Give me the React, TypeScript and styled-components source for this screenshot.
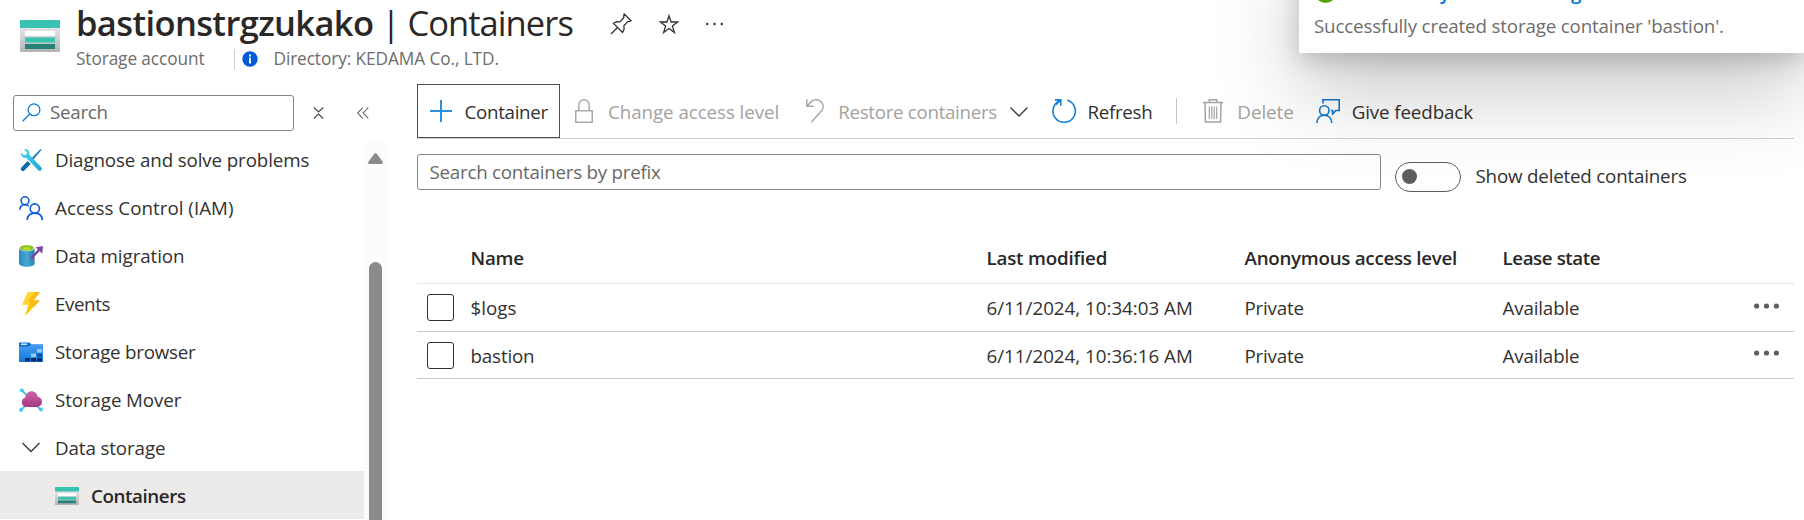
import React from 'react';
import styled, { createGlobalStyle, css } from 'styled-components';

const Global = createGlobalStyle`
  * { box-sizing: border-box; }
  body {
    margin: 0;
    background: #fff;
    color: #323130;
    font-family: "Open Sans", "Noto Sans", sans-serif;
    font-size: 18.75px;
    line-height: 26px;
    overflow: hidden;
  }
  svg { display: block; flex: none; overflow: visible; }
`;

const Page = styled.div`
  position: relative;
  width: 1804px;
  height: 520px;
  overflow: hidden;
  display: flex;
  flex-direction: column;
`;

/* Text with optional tracking */
const Label = styled.span<{ $track?: number }>`
  white-space: pre;
  letter-spacing: ${(p) => p.$track ?? 0}px;
`;

/* ---------- header ---------- */
const Header = styled.header`
  height: 84px;
  flex: none;
  display: flex;
  padding: 0 0 0 20px;
`;
const HeaderIcon = styled.div`
  width: 40px;
  padding-top: 20px;
`;
const HeaderText = styled.div`
  margin-left: 16px;
`;
const TitleRow = styled.div`
  height: 48px;
  display: flex;
  align-items: center;
`;
const Title = styled.h1`
  margin: 0;
  padding-bottom: 2px;
  font-size: 34.5px;
  line-height: 46px;
  font-weight: 400;
  color: #292827;
  white-space: pre;
  letter-spacing: -0.95px;
`;
const TitleName = styled.strong`
  font-weight: 600;
  letter-spacing: -0.62px;
`;
const TitleActions = styled.div`
  display: flex;
  align-items: center;
  gap: 27px;
  margin-left: 37px;
  height: 48px;
`;
const SubRow = styled.div`
  display: flex;
  align-items: center;
  height: 22px;
  font-size: 17.25px;
  line-height: 22px;
  color: #6e6d6c;
`;
const SubDivider = styled.div`
  width: 1px;
  height: 21px;
  margin: 0 7px 0 30px;
  background: #d2d0ce;
`;
const InfoIcon = styled.svg`
  margin-right: 15px;
`;

const Body = styled.div`
  display: flex;
  flex: 1;
  min-height: 0;
`;

/* ---------- sidebar ---------- */
const Sidebar = styled.aside`
  width: 417px;
  flex: none;
  display: flex;
  flex-direction: column;
`;
const SideTop = styled.div`
  display: flex;
  align-items: center;
  height: 51px;
  padding: 7px 0 0 13px;
`;
const boxed = css`
  border: 1px solid #868584;
  border-radius: 3px;
  background: #fff;
  display: flex;
  align-items: center;
  color: #696867;
`;
const SideSearch = styled.div`
  ${boxed}
  width: 281px;
  height: 36px;
  padding: 0 0 2px 8px;
  gap: 9px;
`;
const SideTools = styled.div`
  display: flex;
  align-items: center;
  margin-left: 19px;
  gap: 33px;
`;
const SideScroll = styled.div`
  display: flex;
  flex: 1;
  min-height: 0;
`;
const Menu = styled.nav`
  width: 364px;
`;
const MenuItem = styled.div<{ $selected?: boolean }>`
  display: flex;
  align-items: center;
  height: 48px;
  padding-top: 2px;
  padding-left: ${(p) => (p.$selected ? 55 : 19)}px;
  gap: 12px;
  background: ${(p) => (p.$selected ? '#edebea' : 'transparent')};
  font-weight: ${(p) => (p.$selected ? 600 : 400)};
  color: ${(p) => (p.$selected ? '#292827' : '#323130')};
`;
const ScrollTrack = styled.div`
  width: 23px;
  margin-top: 6px;
  background: #fcfcfc;
  display: flex;
  flex-direction: column;
  align-items: center;
  padding-top: 12px;
`;
const ScrollThumb = styled.div`
  width: 13px;
  flex: 1;
  margin-top: 98px;
  border-radius: 7px 7px 0 0;
  background: #8b8b8b;
`;

/* ---------- content ---------- */
const Content = styled.main`
  flex: 1;
  display: flex;
  flex-direction: column;
  padding-right: 10px;
`;
const Toolbar = styled.div`
  display: flex;
  height: 55px;
  border-bottom: 1px solid #d0cfce;
`;
const Command = styled.div<{ $left?: number; $gap: number; $disabled?: boolean; $focused?: boolean }>`
  display: flex;
  align-items: center;
  height: 54px;
  margin-left: ${(p) => p.$left ?? 0}px;
  gap: ${(p) => p.$gap}px;
  color: ${(p) => (p.$disabled ? '#a3a2a1' : '#323130')};
  ${Label} {
    padding-top: 2px;
  }
  ${(p) =>
    p.$focused &&
    css`
      width: 143px;
      border: 1px solid #4f4e4d;
      padding-left: 12px;
    `}
`;
const CommandDivider = styled.div`
  width: 1px;
  height: 26px;
  margin: 14px 0 0 24px;
  background: #c8c6c4;
`;
const FilterRow = styled.div`
  display: flex;
  height: 53px;
  padding-top: 15px;
`;
const PrefixSearch = styled.div`
  ${boxed}
  width: 964px;
  height: 36px;
  padding: 0 0 1px 11.5px;
  background: transparent;
`;
const Toggle = styled.div`
  width: 66px;
  height: 30px;
  margin: 8px 14.5px 0 14px;
  border: 1px solid #605e5c;
  border-radius: 15px;
  padding: 6px;
`;
const Knob = styled.div`
  width: 15px;
  height: 15px;
  border-radius: 50%;
  background: #605e5c;
`;
const ToggleLabel = styled.div`
  padding-top: 9px;
`;

const grid = css`
  display: grid;
  grid-template-columns: 53.5px 516px 258px 258px 251.5px 40px;
  align-items: center;
`;
const TableHead = styled.div`
  ${grid}
  height: 52px;
  margin-top: 40px;
  padding-top: 1px;
  font-weight: 600;
  color: #292827;
  border-bottom: 1px solid #e8e7e6;
`;
const TableRow = styled.div<{ $height: number }>`
  ${grid}
  height: ${(p) => p.$height}px;
  border-bottom: 1px solid #c9c8c7;
`;
const Checkbox = styled.div`
  width: 27px;
  height: 27px;
  margin-left: 10px;
  border: 1px solid #323130;
  border-radius: 3px;
`;
const Cell = styled(Label)`
  padding-top: 1px;
`;
const RowMenu = styled.div`
  padding: 0 0 4px 0;
`;

/* ---------- notification ---------- */
const Toast = styled.section`
  position: absolute;
  top: -60px;
  left: 1299px;
  width: 505px;
  height: 113px;
  background: #fff;
  padding: 42px 0 0 15px;
  box-shadow: 0 38px 86px rgba(0, 0, 0, 0.22), 0 7px 22px rgba(0, 0, 0, 0.18);
`;
const ToastTitle = styled.div`
  display: flex;
  align-items: center;
  gap: 7px;
  height: 22px;
  line-height: 22px;
  font-weight: 600;
  color: #0078d4;
`;
const ToastText = styled.div`
  margin-top: 9px;
  color: #6e6d6c;
`;

/* ---------- icons ---------- */
const StorageIcon = ({ w, h }: { w: number; h: number }) => (
  <svg width={w} height={h} viewBox="0 0 40 32" preserveAspectRatio="none">
    <defs>
      <linearGradient id="stg" x1="0" y1="0" x2="0" y2="1">
        <stop offset="0" stopColor="#e6e6e6" />
        <stop offset="1" stopColor="#b3b3b3" />
      </linearGradient>
    </defs>
    <path d="M0 7h40v23.500a1.500 1.500 0 0 1-1.500 1.500h-37A1.500 1.500 0 0 1 0 30.500z" fill="url(#stg)" />
    <path d="M1 0h38a1 1 0 0 1 1 1v7H0V1a1 1 0 0 1 1-1z" fill="#37c2b1" />
    <path d="M5 11h30v5H5z" fill="#fff" />
    <path d="M5 17.500h30v5H5z" fill="#37c2b1" />
    <path d="M5 24h30v5H5z" fill="#258277" />
  </svg>
);
const PinIcon = () => (
  <svg width="22" height="22" viewBox="0 0 22 22" fill="none" stroke="#323130" strokeWidth="1.300">
    <path d="M1 21l6.500-6.500M14.200 1l6.800 6.800-2 .9-1.300-.1-3.800 4.200.2 3.500-1.600 3.100L3.500 10.400l3-1.700 3.400.2 3.900-4.200-.1-1.600z" />
  </svg>
);
const StarIcon = () => (
  <svg width="20" height="20" viewBox="0 0 20 20" fill="none" stroke="#323130" strokeWidth="1.300">
    <path d="M10 1.800l2.100 6.200h6.500l-5.200 3.900 2 6.700L10 14.600l-5.400 4 2-6.700L1.400 8h6.500z" />
  </svg>
);
const SearchIcon = () => (
  <svg width="19" height="19" viewBox="0 0 19 19" fill="none" stroke="#0f7bd4" strokeWidth="1.300">
    <circle cx="12" cy="6.800" r="5.900" />
    <path d="M7.700 11L.6 18.200" />
  </svg>
);
const CollapseIcon = () => (
  <svg width="11" height="12" viewBox="0 0 11 12" fill="none" stroke="#484746" strokeWidth="1.100">
    <path d="M.8.500l4.700 4.400L10.200.500M.8 11.500l4.700-4.400 4.700 4.400" />
  </svg>
);
const DoubleLeftIcon = () => (
  <svg width="12" height="12" viewBox="0 0 12 12" fill="none" stroke="#605e5c" strokeWidth="1.100">
    <path d="M5.800.500L.700 6l5.100 5.500M11.300.500L6.200 6l5.100 5.500" />
  </svg>
);
const ToolsIcon = () => (
  <svg width="24" height="24" viewBox="0 0 24 24">
    <defs>
      <linearGradient id="wr" x1="0" y1="0" x2="1" y2="1">
        <stop offset="0" stopColor="#50d5f0" />
        <stop offset="1" stopColor="#1aa5d0" />
      </linearGradient>
    </defs>
    <path d="M21.500 1l1 1-8.300 9.700-1.700-1.500z" fill="#1583b4" />
    <path d="M8.600 13l3 3-6.200 6.500a2 2 0 0 1-3-3z" fill="#0b6aa8" />
    <path d="M5.200 1.200c3-.8 6 2 5 5.200l12 12.800a2 2 0 0 1-3 3L7.200 9.800C4.400 10.600 1.400 8.200 2 4.400l3 2.800 2.400-.7.500-2.300z" fill="url(#wr)" />
  </svg>
);
const PeopleIcon = () => (
  <svg width="24" height="24" viewBox="0 0 24 24" fill="none" stroke="#0b5cdb" strokeWidth="1.600">
    <circle cx="6" cy="4.700" r="3.900" />
    <circle cx="15.800" cy="12.500" r="4.600" />
    <path d="M.7 13.800C.9 10.400 3 8.700 6 8.700c1.700 0 2.900.5 3.800 1.400M8.200 24c.2-4.300 3.200-6.900 7.600-6.900s7.300 2.600 7.500 6.900" />
  </svg>
);
const MigrationIcon = () => (
  <svg width="24" height="24" viewBox="0 0 24 24">
    <defs>
      <linearGradient id="dm" x1="0" x2="1" y1="0" y2="0">
        <stop offset="0" stopColor="#2b88ba" />
        <stop offset=".5" stopColor="#45a8d5" />
        <stop offset="1" stopColor="#2b7fae" />
      </linearGradient>
    </defs>
    <path d="M0 4v15.500c0 1.900 3.600 3.300 7.800 3.300s7.800-1.400 7.800-3.300V4z" fill="url(#dm)" />
    <ellipse cx="7.800" cy="4" rx="7.800" ry="3.200" fill="#e9f3d5" />
    <ellipse cx="7.800" cy="4" rx="6.700" ry="2.700" fill="#86c010" />
    <ellipse cx="7.800" cy="4.500" rx="3.800" ry="1.300" fill="#b7dc4a" />
    <path d="M12.500 14l8-8.500" stroke="#7b3f9d" strokeWidth="2.400" />
    <path d="M16.500 3.200L24 2l-.7 7.800z" fill="#8347a6" />
    <circle cx="13" cy="14" r="1.700" fill="#8347a6" />
  </svg>
);
const EventsIcon = () => (
  <svg width="24" height="24" viewBox="0 0 24 24">
    <path d="M9 0h12l-6.500 8.500H21L6 24l3.600-11.500H3.500z" fill="#fcc40c" />
    <path d="M9 0h7L8.500 9.500H14L9.600 12.500H3.500z" fill="#ffd52e" />
    <path d="M21 0l-6.500 8.500H21l-6.500 6.500L9.500 8.800 16 0z" fill="#fbb916" />
  </svg>
);
const BrowserIcon = () => (
  <svg width="24" height="24" viewBox="0 0 24 24">
    <defs>
      <linearGradient id="sb" x1="0" x2="0" y1="0" y2="1">
        <stop offset="0" stopColor="#4a9af0" />
        <stop offset="1" stopColor="#0f7add" />
      </linearGradient>
    </defs>
    <path d="M0 2.500h10.500L12.500 4.500H24V12H0z" fill="#0b72cc" />
    <path d="M2 3.500h6v1.500H2z" fill="#d5e9fb" />
    <path d="M0 6.500h10L12.500 4.500H24V22H0z" fill="url(#sb)" />
    <path d="M18 9h5v3.500h-5zM12 13.500h5V17h-5z" fill="#9bc8fb" />
    <path d="M18 13.500h5V17h-5z" fill="#0a55a8" />
    <path d="M6 18h5v3.500H6zM12 18h5v3.500h-5zM18 18h5v3.500h-5z" fill="#082c60" />
  </svg>
);
const MoverIcon = () => (
  <svg width="24" height="24" viewBox="0 0 24 24">
    <defs>
      <linearGradient id="mv" x1="0" x2="0" y1="0" y2="1">
        <stop offset="0" stopColor="#cf62ae" />
        <stop offset="1" stopColor="#a4397f" />
      </linearGradient>
    </defs>
    <g stroke="#3cc8ea" strokeWidth="1.800">
      <path d="M3 2.500l6 6M2 22l6-6M22 22l-6-6" />
    </g>
    <g fill="#3ccbee">
      <circle cx="2.800" cy="2.300" r="1.900" />
      <circle cx="2" cy="22" r="1.900" />
      <circle cx="22" cy="21.500" r="1.900" />
    </g>
    <path d="M6.500 19a5 5 0 0 1-.3-9.500C6.800 5.500 9.500 3.200 12.500 3.200c3.300 0 5.700 2.200 6.200 5.600 2.600.4 4.300 2.400 4.300 5 0 3-2.200 5.200-5.200 5.200z" fill="url(#mv)" />
  </svg>
);
const ChevronIcon = ({ size = 24 }: { size?: number }) => (
  <svg width={size} height="24" viewBox={size === 24 ? '0 0 24 24' : '3 -1.500 18 24'} fill="none" stroke="#3b3a39" strokeWidth="1.400">
    <path d="M3.500 7L12 15.500l8.500-8.500" />
  </svg>
);
const PlusIcon = () => (
  <svg width="22" height="24" viewBox="0 0 22 24" stroke="#2c8fdd" strokeWidth="2">
    <path d="M0 12h22M11 1v22" />
  </svg>
);
const LockIcon = () => (
  <svg width="18" height="24" viewBox="0 0 18 24" fill="none" stroke="#aaa9a8" strokeWidth="1.500">
    <path d="M.750 11.800h16.500v11.400H.750zM3.800 11.800V6A5.200 5.200 0 0 1 14.200 6v5.800" />
  </svg>
);
const UndoIcon = () => (
  <svg width="18" height="24" viewBox="0 0 18 24" fill="none" stroke="#a9a8a7" strokeWidth="1.500">
    <path d="M.8.300v6.900h6.900M1 7L5.500 2.400C8 .2 12.500.200 15 2.700c2.700 2.700 2.900 6.600.3 9.400L5.300 23.300" />
  </svg>
);
const RefreshIcon = () => (
  <svg width="24" height="24" viewBox="0 0 24 24" fill="none" stroke="#0f7fd8" strokeWidth="1.600">
    <path d="M15.300 1.300A11.200 11.200 0 1 1 7.400 1.900M3 .9h5.800v5.800M3.800 5.800L8.500 1.200" />
  </svg>
);
const TrashIcon = () => (
  <svg width="20" height="24" viewBox="0 0 20 24" fill="none" stroke="#a4a3a2" strokeWidth="1.500">
    <path d="M0 3.600h20M6.300 3.400V.800h7.400v2.600M2 3.800l.4 19.300h15.200L18 3.800" />
    <path d="M6.300 7.500v12.500M8.800 7.500v12.500M11.200 7.500v12.500M13.700 7.500v12.500" strokeWidth="1.200" />
  </svg>
);
const FeedbackIcon = () => (
  <svg width="24" height="24" viewBox="0 0 24 24" fill="none" stroke="#1079cf" strokeWidth="1.600">
    <path d="M7 4.500V.800h16.200v10.700h-3.400l-3.200 3.400v-3.400h-1.800" />
    <circle cx="8.300" cy="11.500" r="4.700" />
    <path d="M.8 24c.2-4.600 3.200-7.800 7.500-7.800s7.300 3.200 7.500 7.800" />
  </svg>
);
const Dots = ({ w, r, color }: { w: number; r: number; color: string }) => (
  <svg width={w} height="8" viewBox={`0 0 ${w} 8`} fill={color}>
    <circle cx={r} cy="4" r={r} />
    <circle cx={w / 2} cy="4" r={r} />
    <circle cx={w - r} cy="4" r={r} />
  </svg>
);

const menu: { label: string; track: number; icon: React.ReactNode }[] = [
  { label: 'Diagnose and solve problems', track: -0.12, icon: <ToolsIcon /> },
  { label: 'Access Control (IAM)', track: 0.03, icon: <PeopleIcon /> },
  { label: 'Data migration', track: -0.08, icon: <MigrationIcon /> },
  { label: 'Events', track: -0.4, icon: <EventsIcon /> },
  { label: 'Storage browser', track: -0.24, icon: <BrowserIcon /> },
  { label: 'Storage Mover', track: -0.1, icon: <MoverIcon /> },
  { label: 'Data storage', track: -0.11, icon: <ChevronIcon /> },
];

const rows = [
  { name: '$logs', track: 0, modified: '6/11/2024, 10:34:03 AM', height: 48 },
  { name: 'bastion', track: -0.15, modified: '6/11/2024, 10:36:16 AM', height: 47 },
];

export default function App() {
  return (
    <Page>
      <Global />
      <Header>
        <HeaderIcon>
          <StorageIcon w={40} h={32} />
        </HeaderIcon>
        <HeaderText>
          <TitleRow>
            <Title>
              <TitleName>bastionstrgzukako</TitleName> | Containers
            </Title>
            <TitleActions>
              <PinIcon />
              <StarIcon />
              <Dots w={17} r={1.2} color="#323130" />
            </TitleActions>
          </TitleRow>
          <SubRow>
            <Label $track={-0.1}>Storage account</Label>
            <SubDivider />
            <InfoIcon width="16" height="16" viewBox="0 0 16 16">
              <circle cx="8" cy="8" r="7.700" fill="#015cda" />
              <path d="M7 6.800h2v5.700H7zM7 3.500h2v2H7z" fill="#fff" />
            </InfoIcon>
            <Label $track={-0.09}>Directory: KEDAMA Co., LTD.</Label>
          </SubRow>
        </HeaderText>
      </Header>

      <Body>
        <Sidebar>
          <SideTop>
            <SideSearch>
              <SearchIcon />
              <Label $track={-0.27}>Search</Label>
            </SideSearch>
            <SideTools>
              <CollapseIcon />
              <DoubleLeftIcon />
            </SideTools>
          </SideTop>
          <SideScroll>
            <Menu>
              {menu.map((m) => (
                <MenuItem key={m.label}>
                  {m.icon}
                  <Label $track={m.track}>{m.label}</Label>
                </MenuItem>
              ))}
              <MenuItem $selected>
                <StorageIcon w={24} h={18} />
                <Label $track={-0.4}>Containers</Label>
              </MenuItem>
            </Menu>
            <ScrollTrack>
              <svg width="15" height="11" viewBox="0 0 15 11" fill="#8b8b8b">
                <path d="M6.300.7q1.200-1.400 2.400 0l5.800 7.800q1.200 2.500-1.200 2.500H1.700q-2.400 0-1.200-2.500z" />
              </svg>
              <ScrollThumb />
            </ScrollTrack>
          </SideScroll>
        </Sidebar>

        <Content>
          <Toolbar>
            <Command $gap={12.5} $focused>
              <PlusIcon />
              <Label $track={-0.31}>Container</Label>
            </Command>
            <Command $left={15} $gap={15} $disabled>
              <LockIcon />
              <Label $track={-0.06}>Change access level</Label>
            </Command>
            <Command $left={26.5} $gap={14.5} $disabled>
              <UndoIcon />
              <Label $track={-0.31}>Restore containers</Label>
            </Command>
            <Command $left={13} $gap={0}>
              <ChevronIcon size={18} />
            </Command>
            <Command $left={24} $gap={11.5}>
              <RefreshIcon />
              <Label $track={-0.3}>Refresh</Label>
            </Command>
            <CommandDivider />
            <Command $left={26} $gap={14} $disabled>
              <TrashIcon />
              <Label $track={-0.05}>Delete</Label>
            </Command>
            <Command $left={22} $gap={12}>
              <FeedbackIcon />
              <Label $track={-0.11}>Give feedback</Label>
            </Command>
          </Toolbar>

          <FilterRow>
            <PrefixSearch>
              <Label $track={-0.24}>Search containers by prefix</Label>
            </PrefixSearch>
            <Toggle>
              <Knob />
            </Toggle>
            <ToggleLabel>
              <Label $track={-0.19}>Show deleted containers</Label>
            </ToggleLabel>
          </FilterRow>

          <TableHead>
            <span />
            <Label $track={-0.25}>Name</Label>
            <Label $track={-0.2}>Last modified</Label>
            <Label $track={-0.27}>Anonymous access level</Label>
            <Label $track={-0.42}>Lease state</Label>
          </TableHead>
          {rows.map((r) => (
            <TableRow key={r.name} $height={r.height}>
              <Checkbox />
              <Cell $track={r.track}>{r.name}</Cell>
              <Cell $track={0}>{r.modified}</Cell>
              <Cell $track={-0.19}>Private</Cell>
              <Cell $track={-0.15}>Available</Cell>
              <RowMenu>
                <Dots w={25} r={2.6} color="#605e5c" />
              </RowMenu>
            </TableRow>
          ))}
        </Content>
      </Body>

      <Toast>
        <ToastTitle>
          <svg width="23" height="22" viewBox="0 0 23 22">
            <circle cx="11.500" cy="10" r="11" fill="#57a300" />
            <path d="M6 10l3.500 3.500L16 7" fill="none" stroke="#fff" strokeWidth="1.800" />
          </svg>
          <Label $track={-0.3}>Successfully created storage container</Label>
        </ToastTitle>
        <ToastText>
          <Label $track={-0.16}>Successfully created storage container 'bastion'.</Label>
        </ToastText>
      </Toast>
    </Page>
  );
}
